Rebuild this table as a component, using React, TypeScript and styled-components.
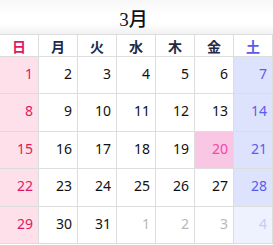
import styled, { createGlobalStyle } from 'styled-components';

const GlobalStyle = createGlobalStyle`
    html, body {
        margin: 0;
        padding: 0;
        background: #ffffff;
    }
    body {
        font-family: "Noto Sans", "Noto Sans CJK JP", sans-serif;
    }
`;

type Kind = 'normal' | 'sun' | 'sat' | 'today' | 'other' | 'otherSat';

const bgColors: Record<Kind, string> = {
    normal: '#ffffff',
    sun: '#fde0ea',
    sat: '#dde3fd',
    today: '#f9c6e4',
    other: '#ffffff',
    otherSat: '#eef1fe',
};

const textColors: Record<Kind, string> = {
    normal: '#111111',
    sun: '#e3175f',
    sat: '#5b5bea',
    today: '#f545a6',
    other: '#b8b8b8',
    otherSat: '#c6cbf2',
};

const Calendar = styled.div`
    width: 273px;
    background: #ffffff;
`;

const Title = styled.div`
    height: 34px;
    display: flex;
    align-items: center;
    justify-content: center;
    border-bottom: 1px solid #dddddd;
    background: linear-gradient(to bottom, #f7f7f7 0%, #ffffff 45%, #ffffff 70%, #f1f1f1 100%);
    font-family: "Liberation Serif", "Noto Sans CJK JP", serif;
    font-size: 19px;
    font-weight: 500;
    color: #111111;
    padding-right: 6px;
`;

const Grid = styled.div`
    display: grid;
    grid-template-columns: repeat(7, 1fr);
`;

const WeekLabel = styled.div<{ $color: string }>`
    height: 21px;
    display: flex;
    align-items: center;
    justify-content: center;
    border-right: 1px solid #dddddd;
    border-bottom: 1px solid #dddddd;
    font-family: "Noto Sans CJK JP", sans-serif;
    font-weight: 700;
    font-size: 14px;
    color: ${(p) => p.$color};
`;

const DayCell = styled.div<{ $kind: Kind }>`
    box-sizing: content-box;
    padding: 8px 5px 0 0;
    height: 28.4px;
    text-align: right;
    border-right: 1px solid #dddddd;
    border-bottom: 1px solid #dddddd;
    background: ${(p) => bgColors[p.$kind]};
    color: ${(p) => textColors[p.$kind]};
    font-size: 14px;
    line-height: 18px;
`;

const weekdays = [
    { label: '日', color: '#e3175f' },
    { label: '月', color: '#1c2b4a' },
    { label: '火', color: '#1c2b4a' },
    { label: '水', color: '#1c2b4a' },
    { label: '木', color: '#1c2b4a' },
    { label: '金', color: '#1c2b4a' },
    { label: '土', color: '#5b5bea' },
];

function buildDays() {
    const days: { n: number; kind: Kind }[] = [];
    for (let i = 0; i < 35; i++) {
        const col = i % 7;
        const inMonth = i < 31;
        const n = inMonth ? i + 1 : i - 30;
        let kind: Kind = 'normal';
        if (!inMonth) kind = col === 6 ? 'otherSat' : col === 0 ? 'sun' : 'other';
        else if (n === 20) kind = 'today';
        else if (col === 0) kind = 'sun';
        else if (col === 6) kind = 'sat';
        days.push({ n, kind });
    }
    return days;
}

export default function App() {
    const days = buildDays();
    return (
        <>
            <GlobalStyle />
            <Calendar>
                <Title>3月</Title>
                <Grid>
                    {weekdays.map((w) => (
                        <WeekLabel key={w.label} $color={w.color}>
                            {w.label}
                        </WeekLabel>
                    ))}
                    {days.map((d, i) => (
                        <DayCell key={i} $kind={d.kind}>
                            {d.n}
                        </DayCell>
                    ))}
                </Grid>
            </Calendar>
        </>
    );
}
